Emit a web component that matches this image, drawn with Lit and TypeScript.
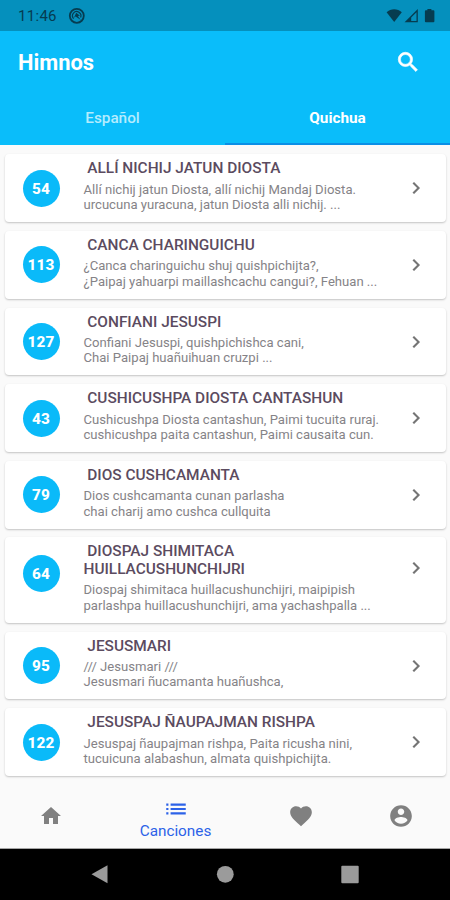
import { LitElement, html, svg, css } from "lit";
import { customElement } from "lit/decorators.js";

interface Hymn {
  n: number;
  title: string[];
  lines: string[];
}

const HYMNS: Hymn[] = [
  { n: 54, title: ["ALLÍ NICHIJ JATUN DIOSTA"], lines: ["Allí nichij jatun Diosta, allí nichij Mandaj Diosta.", "urcucuna yuracuna, jatun Diosta alli nichij. ..."] },
  { n: 113, title: ["CANCA CHARINGUICHU"], lines: ["¿Canca charinguichu shuj quishpichijta?,", "¿Paipaj yahuarpi maillashcachu cangui?, Fehuan ..."] },
  { n: 127, title: ["CONFIANI JESUSPI"], lines: ["Confiani Jesuspi, quishpichishca cani,", "Chai Paipaj huañuihuan cruzpi ..."] },
  { n: 43, title: ["CUSHICUSHPA DIOSTA CANTASHUN"], lines: ["Cushicushpa Diosta cantashun, Paimi tucuita ruraj.", "cushicushpa paita cantashun, Paimi causaita cun."] },
  { n: 79, title: ["DIOS CUSHCAMANTA"], lines: ["Dios cushcamanta cunan parlasha", "chai charij amo cushca cullquita"] },
  { n: 64, title: ["DIOSPAJ SHIMITACA", "HUILLACUSHUNCHIJRI"], lines: ["Diospaj shimitaca huillacushunchijri, maipipish", "parlashpa huillacushunchijri, ama yachashpalla ..."] },
  { n: 95, title: ["JESUSMARI"], lines: ["/// Jesusmari ///", "Jesusmari ñucamanta huañushca,"] },
  { n: 122, title: ["JESUSPAJ ÑAUPAJMAN RISHPA"], lines: ["Jesuspaj ñaupajman rishpa, Paita ricusha nini,", "tucuicuna alabashun, almata quishpichijta."] },
];

const icon = (path: string, size: number, weight = 0) => html`
  <svg width=${size} height=${size} viewBox="0 0 24 24" fill="currentColor" stroke="currentColor" stroke-width=${weight}>${svg`<path d=${path}></path>`}</svg>
`;

const SEARCH = "M15.5 14h-.79l-.28-.27A6.471 6.471 0 0 0 16 9.5 6.5 6.5 0 1 0 9.5 16c1.61 0 3.09-.59 4.23-1.57l.27.28v.79l5 4.99L20.49 19l-4.99-5zm-6 0C7.01 14 5 11.99 5 9.5S7.01 5 9.5 5 14 7.01 14 9.5 11.99 14 9.5 14z";
const CHEVRON = "M10 6L8.59 7.41 13.17 12l-4.58 4.59L10 18l6-6z";
const HOME = "M10 20v-6h4v6h5v-8h3L12 3 2 12h3v8z";
const LIST = "M3 13h2v-2H3v2zm0 4h2v-2H3v2zm0-8h2V7H3v2zm4 4h14v-2H7v2zm0 4h14v-2H7v2zM7 7v2h14V7H7z";
const HEART = "M12 21.35l-1.45-1.32C5.4 15.36 2 12.28 2 8.5 2 5.42 4.42 3 7.5 3c1.74 0 3.41.81 4.5 2.09C13.09 3.81 14.76 3 16.5 3 19.58 3 22 5.42 22 8.5c0 3.78-3.4 6.86-8.55 11.54L12 21.35z";
const ACCOUNT = "M12 2C6.48 2 2 6.48 2 12s4.48 10 10 10 10-4.48 10-10S17.52 2 12 2zm0 3c1.66 0 3 1.34 3 3s-1.34 3-3 3-3-1.34-3-3 1.34-3 3-3zm0 14.2c-2.5 0-4.71-1.28-6-3.22.03-1.99 4-3.08 6-3.08 1.99 0 5.97 1.09 6 3.08-1.29 1.94-3.5 3.22-6 3.22z";

@customElement("app-root")
export class AppRoot extends LitElement {
  static styles = css`
    :host {
      display: flex;
      flex-direction: column;
      width: 450px;
      height: 900px;
      overflow: hidden;
      background: #fafafa;
      font-family: Roboto, "Liberation Sans", sans-serif;
    }
    * { box-sizing: border-box; }
    svg { display: block; flex: none; }
    .status {
      flex: none;
      display: flex;
      align-items: center;
      height: 31px;
      padding: 1px 14.5px 0 18px;
      background: #0590bd;
      color: #063c50;
      font-size: 15px;
    }
    .clock { width: 50px; letter-spacing: 0.3px; }
    .signals { margin-left: auto; }
    .bar {
      flex: none;
      display: flex;
      align-items: center;
      justify-content: space-between;
      height: 62px;
      padding: 0 29px 0 18px;
      background: #0abdfa;
      color: #fff;
    }
    .heading { font-size: 21.9px; font-weight: 700; }
    .tabs {
      flex: none;
      display: grid;
      grid-template-columns: 1fr 1fr;
      height: 52px;
      background: #0abdfa;
    }
    .tab {
      display: flex;
      align-items: center;
      justify-content: center;
      color: #b4ecfe;
      font-size: 15.3px;
      font-weight: 500;
      border-bottom: 2px solid transparent;
    }
    .tab.on { color: #fff; font-weight: 700; border-color: #0b8fe6; }
    .list {
      flex: 1;
      min-height: 0;
      display: flex;
      flex-direction: column;
      gap: 8.75px;
      padding: 9.4px 4.5px 0 5px;
    }
    .card {
      flex: none;
      display: flex;
      align-items: center;
      height: 67.85px;
      padding: 0 18px 0 17.5px;
      border-radius: 4px;
      background: #fff;
      box-shadow: 0 1px 2px rgba(0, 0, 0, 0.22);
    }
    .card.tall { height: 85.5px; }
    .badge {
      flex: none;
      display: flex;
      align-items: center;
      justify-content: center;
      width: 37px;
      height: 37px;
      border-radius: 50%;
      background: #0abaf9;
      color: #fff;
      font-size: 15.3px;
      font-weight: 800;
      letter-spacing: 0.1px;
      margin-right: 24px;
      padding-top: 1px;
    }
    .tall .badge { margin-bottom: 13px; }
    .text { flex: 1; align-self: flex-start; padding-top: 6px; }
    .title {
      color: #5b4b60;
      font-size: 15.4px;
      font-weight: 500;
      line-height: 17.7px;
      margin-bottom: 3.7px;
      white-space: pre;
    }
    .verse { color: #858387; font-size: 13.1px; line-height: 15.4px; white-space: pre; }
    .go { flex: none; color: #757575; }
    .tall .go { margin-bottom: 24px; }
    .nav {
      flex: none;
      display: grid;
      grid-template-columns: 100px 150px 100px 100px;
      height: 62px;
      padding-left: 0.5px;
      background: #fafafa;
      color: #808080;
      border-bottom: 1px solid #a5a5a5;
    }
    .item {
      display: flex;
      flex-direction: column;
      align-items: center;
      justify-content: center;
      padding-bottom: 2.5px;
    }
    .item.on {
      color: #2c62e8;
      font-size: 15.3px;
      line-height: 18px;
      padding-top: 1px;
      padding-bottom: 0;
    }
    .system {
      flex: none;
      display: flex;
      justify-content: center;
      height: 51px;
      background: #000;
    }
  `;

  private card(h: Hymn) {
    return html`
      <article class="card ${h.title.length > 1 ? "tall" : ""}">
        <div class="badge">${h.n}</div>
        <div class="text">
          <div class="title">${" " + h.title.join("\n")}</div>
          <div class="verse">${h.lines.join("\n")}</div>
        </div>
        <div class="go">${icon(CHEVRON, 24, 0.1)}</div>
      </article>
    `;
  }

  render() {
    return html`
      <div class="status">
        <span class="clock">11:46</span>
        <svg width="18" height="18" viewBox="0 0 18 18" fill="none" stroke="currentColor">
          <circle cx="8.8" cy="8.8" r="7" stroke-width="1.8"></circle>
          <path d="M5.6 11.6A4.2 4.2 0 1 1 12.6 10.4" stroke-width="1.2"></path>
          <path d="M8.2 5.8L12 8.8L9.8 9L12.8 13L7.6 9.6L6 10.8Z" fill="currentColor" stroke="none"></path>
        </svg>
        <svg class="signals" width="50" height="16" viewBox="0 0 50 16" fill="currentColor">
          <path d="M0.6 4.3C4.8.2 11.6.2 15.8 4.3L8.2 14Z"></path>
          <path d="M18.6 14.2L31.8 1V14.2ZM25.2 12.9H30.5V4.2L25.2 9.5Z" fill-rule="evenodd"></path>
          <path d="M41.4 1h4v1.3h2q1 0 1 1v10q0 1-1 1h-7.5q-1 0-1-1v-10q0-1 1-1H41.4z"></path>
        </svg>
      </div>
      <header class="bar">
        <span class="heading">Himnos</span>
        ${icon(SEARCH, 26.3, 0.6)}
      </header>
      <nav class="tabs">
        <div class="tab">Español</div>
        <div class="tab on">Quichua</div>
      </nav>
      <main class="list">${HYMNS.map((h) => this.card(h))}</main>
      <nav class="nav">
        <div class="item">${icon(HOME, 24)}</div>
        <div class="item on">${icon(LIST, 26)}<span>Canciones</span></div>
        <div class="item">${icon(HEART, 26)}</div>
        <div class="item">${icon(ACCOUNT, 26)}</div>
      </nav>
      <div class="system">
        <svg width="280" height="51" viewBox="0 0 280 51" fill="#9b9b9b">
          <path d="M6.5 25.3L22.5 16.3V34.3Z"></path>
          <circle cx="140.3" cy="25.3" r="8.4"></circle>
          <rect x="256.3" y="16.8" width="17.4" height="17.4" rx="1"></rect>
        </svg>
      </div>
    `;
  }
}
